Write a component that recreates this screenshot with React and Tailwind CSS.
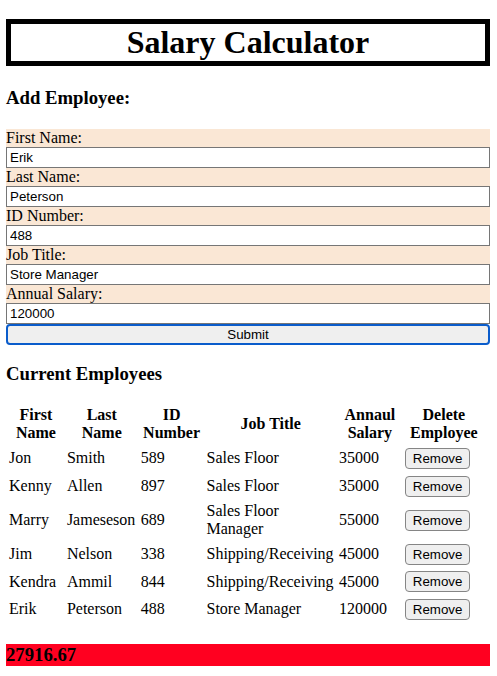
export default function App() {
  const fields = [
    ["First Name:", "Erik"],
    ["Last Name:", "Peterson"],
    ["ID Number:", "488"],
    ["Job Title:", "Store Manager"],
    ["Annual Salary:", "120000"],
  ];
  const rows = [
    ["Jon", "Smith", "589", "Sales Floor", "35000"],
    ["Kenny", "Allen", "897", "Sales Floor", "35000"],
    ["Marry", "Jameseson", "689", "Sales Floor Manager", "55000"],
    ["Jim", "Nelson", "338", "Shipping/Receiving", "45000"],
    ["Kendra", "Ammil", "844", "Shipping/Receiving", "45000"],
    ["Erik", "Peterson", "488", "Store Manager", "120000"],
  ];
  const headers = [
    ["First", "Name"],
    ["Last", "Name"],
    ["ID", "Number"],
    ["Job Title"],
    ["Annaul", "Salary"],
    ["Delete", "Employee"],
  ];
  return (
    <div className="w-[497px] min-h-[676px] bg-white text-black font-['Liberation_Serif','Times_New_Roman',serif] text-[16px]">
      <div className="ml-[6px] w-[484px] pt-[19px]">
        <h1 className="border-[5px] border-black text-center text-[32px] font-bold leading-[37px]">
          Salary Calculator
        </h1>
        <h3 className="mt-[21px] text-[18.72px] font-bold leading-[21.5px]">Add Employee:</h3>
        <form className="mt-[20px]" onSubmit={(e) => e.preventDefault()}>
          {fields.map(([l, v]) => (
            <div key={l}>
              <label className="block h-[18px] leading-[18px] bg-[#fae7d5]">{l}</label>
              <input
                readOnly
                value={v}
                className="block w-full h-[21px] border border-[#767676] bg-white px-[3px] font-['Liberation_Sans',Arial,sans-serif] text-[13.33px] leading-[15px] text-black outline-none"
              />
            </div>
          ))}
          <button
            type="button"
            className="block w-full h-[21px] bg-[#efefef] border-2 border-[#0a5ccb] rounded-[4px] font-['Liberation_Sans',Arial,sans-serif] text-[13.33px] leading-[15px] text-black text-center"
          >
            Submit
          </button>
        </form>
        <h3 className="mt-[18px] text-[18.72px] font-bold leading-[21.5px]">Current Employees</h3>
        <table className="mt-[19px] w-[480px] border-separate border-spacing-[2px]">
          <thead>
            <tr>
              {headers.map((h, i) => (
                <th key={i} className="p-[1px] font-bold text-center align-middle leading-[18.4px]">
                  {h.map((w, j) => (
                    <span key={j}>
                      {j > 0 ? " " : ""}
                      {w}
                    </span>
                  ))}
                </th>
              ))}
            </tr>
          </thead>
          <tbody>
            {rows.map((r) => (
              <tr key={r[0]}>
                {r.map((c, i) => (
                  <td key={i} className="p-[1px] text-left align-middle leading-[18.4px]">
                    {c}
                  </td>
                ))}
                <td className="p-[1px] text-left align-middle">
                  <button
                    type="button"
                    className="block h-[21px] my-[1.25px] px-[7px] bg-[#efefef] border border-[#858585] rounded-[4px] font-['Liberation_Sans',Arial,sans-serif] text-[13.33px] leading-[15px] text-black"
                  >
                    Remove
                  </button>
                </td>
              </tr>
            ))}
          </tbody>
        </table>
        <h3 className="mt-[20px] bg-[#ff0020] text-[18.72px] font-bold leading-[22px]">27916.67</h3>
      </div>
    </div>
  );
}
